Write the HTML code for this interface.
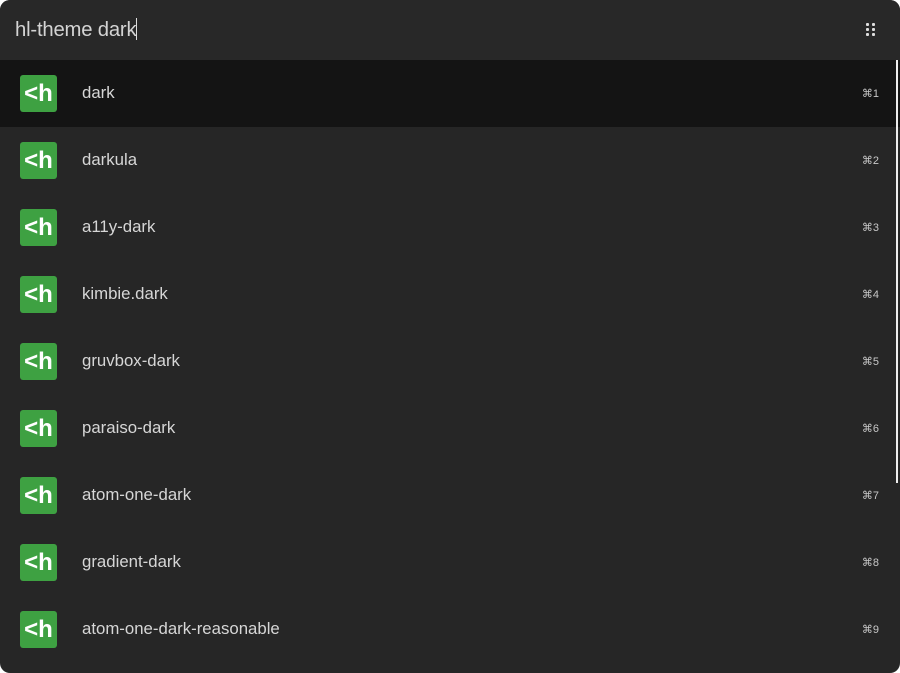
<!DOCTYPE html>
<html><head><style>
html,body{margin:0;padding:0;background:#fff;width:900px;height:673px;overflow:hidden}
.win{position:absolute;left:0;top:0;width:900px;height:673px;background:#262626;border-radius:10px;overflow:hidden;font-family:"Liberation Sans",Arial,sans-serif}
.hdr{position:absolute;left:0;top:0;width:900px;height:60px;background:#282828}
.q{position:absolute;left:15px;top:18px;font-size:20.3px;color:#d4d4d4;letter-spacing:-0.2px}
.caret{display:inline-block;width:1px;height:22px;background:#ddd;vertical-align:-4px}
.dots{position:absolute;left:866px;top:23px;width:10px;height:14px}
.dots i{position:absolute;width:3px;height:3px;background:#ddd;border-radius:1px}
.row{position:absolute;left:0;width:900px;height:67px}
.row.sel{background:#141414}
.ic{position:absolute;left:20px;top:15px;width:37px;height:37px;background:#3ea142;border-radius:3px;color:#fff;font-weight:bold;font-size:24px;line-height:37px;text-align:center;letter-spacing:0}
.t{position:absolute;left:82px;top:23px;font-size:16.8px;color:#d6d6d6}
.k{position:absolute;right:21px;top:27px;font-size:11px;color:#c8c8c8}
.sb{position:absolute;left:896px;top:60px;width:2px;height:423px;background:#eee}
</style></head><body><div class="win">
<div class="hdr"><div class="q">hl-theme dark<span class="caret"></span></div>
<div class="dots"><i style="left:0;top:0"></i><i style="left:6px;top:0"></i><i style="left:0;top:5px"></i><i style="left:6px;top:5px"></i><i style="left:0;top:10px"></i><i style="left:6px;top:10px"></i></div></div>
<div class="row sel" style="top:60px"><div class="ic">&lt;h</div><div class="t">dark</div><div class="k">⌘1</div></div>
<div class="row" style="top:127px"><div class="ic">&lt;h</div><div class="t">darkula</div><div class="k">⌘2</div></div>
<div class="row" style="top:194px"><div class="ic">&lt;h</div><div class="t">a11y-dark</div><div class="k">⌘3</div></div>
<div class="row" style="top:261px"><div class="ic">&lt;h</div><div class="t">kimbie.dark</div><div class="k">⌘4</div></div>
<div class="row" style="top:328px"><div class="ic">&lt;h</div><div class="t">gruvbox-dark</div><div class="k">⌘5</div></div>
<div class="row" style="top:395px"><div class="ic">&lt;h</div><div class="t">paraiso-dark</div><div class="k">⌘6</div></div>
<div class="row" style="top:462px"><div class="ic">&lt;h</div><div class="t">atom-one-dark</div><div class="k">⌘7</div></div>
<div class="row" style="top:529px"><div class="ic">&lt;h</div><div class="t">gradient-dark</div><div class="k">⌘8</div></div>
<div class="row" style="top:596px"><div class="ic">&lt;h</div><div class="t">atom-one-dark-reasonable</div><div class="k">⌘9</div></div>
<div class="sb"></div>
</div></body></html>
